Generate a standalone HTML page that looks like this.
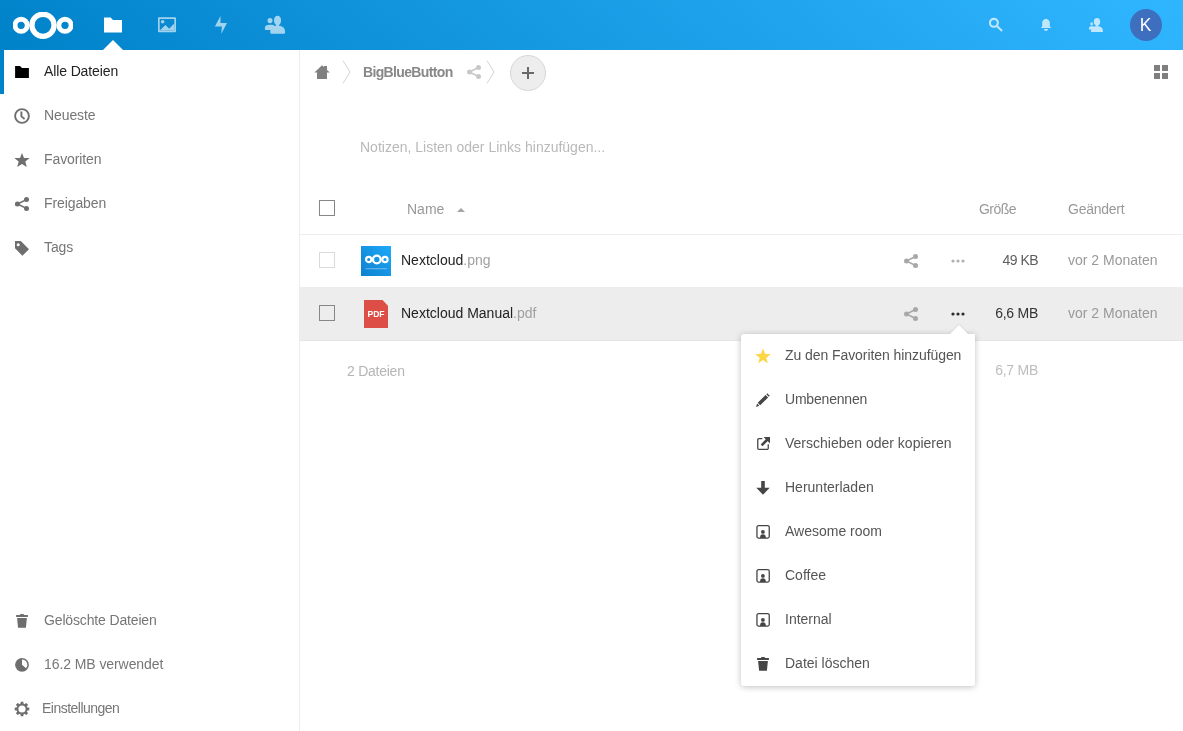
<!DOCTYPE html>
<html><head><meta charset="utf-8">
<style>
*{box-sizing:border-box;margin:0;padding:0}
html,body{width:1183px;height:731px;overflow:hidden;background:#fff;font-family:"Liberation Sans",sans-serif;font-size:14px;color:#222}
.abs{position:absolute}
#header{position:absolute;left:0;top:0;width:1183px;height:50px;background:linear-gradient(40deg,#0082c9 0%,#30b6ff 100%)}
#nav{position:absolute;left:0;top:50px;width:300px;height:681px;border-right:1px solid #ededed;background:#fff}
.ni{position:absolute;left:0;width:299px;height:44px}
.ni .t{position:absolute;left:44px;top:0;line-height:44px;color:#767676;white-space:nowrap}
.ni svg{position:absolute;left:14px;top:14px}
.txt{position:absolute;white-space:nowrap;line-height:20px}
</style></head><body>
<div id="root" style="position:absolute;left:0;top:0;width:1183px;height:731px;will-change:transform">
<div id="header">
  <!-- logo -->
  <svg class="abs" style="left:13px;top:12px" width="60" height="28" viewBox="0 0 60 28">
    <circle cx="30" cy="13.3" r="11.05" fill="none" stroke="#fff" stroke-width="5.3"/>
    <circle cx="8.15" cy="13.3" r="6.1" fill="none" stroke="#fff" stroke-width="4.9"/>
    <circle cx="52" cy="13.3" r="6.1" fill="none" stroke="#fff" stroke-width="4.9"/>
  </svg>
  <!-- folder -->
  <svg class="abs" style="left:104px;top:17px" width="18" height="16" viewBox="0 0 18 16">
    <path d="M0 0.4H6.6L9 2.9H18V15.6H0Z" fill="#fff"/>
  </svg>
  <div class="abs" style="left:103px;top:40px;width:0;height:0;border-left:10px solid transparent;border-right:10px solid transparent;border-bottom:10px solid #fff"></div>
  <!-- gallery -->
  <svg class="abs" style="left:158px;top:17px" width="18" height="16" viewBox="0 0 18 16" opacity="0.62">
    <path d="M1 0.3H17A1 1 0 0 1 18 1.3V14.3A1 1 0 0 1 17 15.3H1A1 1 0 0 1 0 14.3V1.3A1 1 0 0 1 1 0.3Z M1.7 2.1V13.5H16.3V2.1Z" fill="#fff" fill-rule="evenodd"/>
    <circle cx="4.65" cy="4.8" r="1.8" fill="#fff"/>
    <path d="M1.7 13.4L7.4 8.1L11.3 11.7L15.6 7.1L16.3 7.8V13.5H1.7Z" fill="#fff"/>
  </svg>
  <!-- activity -->
  <svg class="abs" style="left:213px;top:15px" width="16" height="20" viewBox="0 0 16 20" opacity="0.62">
    <path d="M7.5 0.9L1.9 11.6H8.9L8.3 18.7L14 8H7.5Z" fill="#fff"/>
  </svg>
  <!-- contacts -->
  <svg class="abs" style="left:264px;top:15px" width="22" height="20" viewBox="0 0 22 20" opacity="0.62">
    <ellipse cx="6" cy="5.6" rx="2.5" ry="2.6" fill="#fff"/>
    <path d="M0.9 13.3C0.9 10.5 2.5 9.7 6 9.7S10.5 10.3 10.5 11V15.1H1.6Q0.9 15.1 0.9 14.3Z" fill="#fff"/>
    <ellipse cx="13.55" cy="5.5" rx="3.55" ry="4.8" fill="#fff"/>
    <path d="M12 9H15V11H12Z" fill="#fff"/>
    <path d="M6.3 16.8C6.3 12.5 9 10.8 13.6 10.8S21 12.5 21 16.8V17.8Q21 18.8 20 18.8H7.3Q6.3 18.8 6.3 17.8Z" fill="#fff"/>
  </svg>
  <!-- search -->
  <svg class="abs" style="left:986px;top:15px" width="20" height="20" viewBox="0 0 20 20" opacity="0.7">
    <circle cx="7.9" cy="7.85" r="3.95" fill="none" stroke="#fff" stroke-width="2.1"/>
    <path d="M10.6 10.8L16.1 16" stroke="#fff" stroke-width="2.1"/>
  </svg>
  <!-- bell -->
  <svg class="abs" style="left:1038px;top:17px" width="16" height="16" viewBox="0 0 16 16" opacity="0.7">
    <path d="M8 1.8C6.6 1.8 5.7 2.9 4.8 3.8C4.3 4.4 4.2 5.2 4.2 6V9.2L2.9 10.9H13.1L11.8 9.2V6C11.8 5.2 11.7 4.4 11.2 3.8C10.3 2.9 9.4 1.8 8 1.8Z" fill="#fff"/>
    <path d="M5.8 12H10.1Q9.5 13.9 8 13.9Q6.4 13.9 5.8 12Z" fill="#fff"/>
  </svg>
  <!-- contacts menu -->
  <svg class="abs" style="left:1088px;top:15px" width="18" height="20" viewBox="0 0 18 20" opacity="0.7">
    <ellipse cx="9" cy="6.7" rx="3.15" ry="3.8" fill="#fff"/>
    <path d="M7.8 10H10.2V11.5H7.8Z" fill="#fff"/>
    <ellipse cx="3.7" cy="8.85" rx="1.3" ry="1.65" fill="#fff"/>
    <path d="M0.9 14C0.9 11.8 2 11.3 3.7 11.3S6.5 11.8 6.5 12.5V14.5H0.9Z" fill="#fff"/>
    <path d="M2.9 16.5C2.9 12.8 5 11.2 9 11.2S15 12.8 15 16.5Q15 16.9 14.5 16.9H3.4Q2.9 16.9 2.9 16.5Z" fill="#fff"/>
  </svg>
  <!-- avatar -->
  <div class="abs" style="left:1130px;top:9px;width:32px;height:32px;border-radius:50%;background:#3e6fbf;color:#fff;font-size:17.5px;line-height:32px;text-align:center;text-indent:-1px">K</div>
</div>

<div id="nav">
  <div class="ni" style="top:0"><div class="abs" style="left:0;top:0;width:4px;height:44px;background:#0082c9"></div>
    <svg width="16" height="16" viewBox="0 0 16 16"><path d="M1.1 2.1H5.9L8.1 4H14.9V13.9H1.1Z" fill="#000"/></svg>
    <div class="t" style="color:#222;top:-1px;letter-spacing:-0.12px">Alle Dateien</div></div>
  <div class="ni" style="top:44px">
    <svg width="16" height="16" viewBox="0 0 16 16"><circle cx="8" cy="8" r="6.9" fill="none" stroke="#6e6e6e" stroke-width="1.9"/><path d="M7.4 3.6V8.4L10.6 11" fill="none" stroke="#6e6e6e" stroke-width="1.9"/></svg>
    <div class="t" style="top:-1px;letter-spacing:-0.1px">Neueste</div></div>
  <div class="ni" style="top:88px">
    <svg width="16" height="16" viewBox="0 0 16 16"><path d="M8 0.9L10 5.9L15.7 6L11.3 9.5L12.8 15L8 11.9L3.2 15L4.7 9.5L0.3 6L6 5.9Z" fill="#6e6e6e"/></svg>
    <div class="t" style="top:-1px;letter-spacing:-0.1px">Favoriten</div></div>
  <div class="ni" style="top:132px">
    <svg width="16" height="16" viewBox="0 0 16 16"><circle cx="3.4" cy="8" r="2.5" fill="#6e6e6e"/><circle cx="12.5" cy="3.6" r="2.5" fill="#6e6e6e"/><circle cx="12.5" cy="12.4" r="2.5" fill="#6e6e6e"/><path d="M3.4 8L12.5 3.6M3.4 8L12.5 12.4" stroke="#6e6e6e" stroke-width="1.6"/></svg>
    <div class="t" style="top:-1px;letter-spacing:-0.1px">Freigaben</div></div>
  <div class="ni" style="top:176px">
    <svg width="16" height="16" viewBox="0 0 16 16"><path d="M1 1H6.8L15 9.3L8.4 15.8L1 8.2Z M4.2 3.3A1.5 1.5 0 1 0 4.2 6.3A1.5 1.5 0 1 0 4.2 3.3Z" fill="#6e6e6e" fill-rule="evenodd"/></svg>
    <div class="t" style="top:-1px;letter-spacing:-0.1px">Tags</div></div>

  <div class="ni" style="top:548px">
    <svg width="16" height="16" viewBox="0 0 16 16"><path d="M2.1 3.1H13.9V4.9H2.1Z M6.2 1.9H9.8V3.1H6.2Z M3.1 6H12.9L11.9 15.7H4Z" fill="#6e6e6e"/></svg>
    <div class="t" style="letter-spacing:-0.15px">Gelöschte Dateien</div></div>
  <div class="ni" style="top:592px">
    <svg width="16" height="16" viewBox="0 0 16 16" style="top:15px"><circle cx="8" cy="7.8" r="6.9" fill="#6e6e6e"/><path d="M8 7.8V2.5A5.3 5.3 0 0 1 12 11.28Z" fill="#fff"/></svg>
    <div class="t" style="letter-spacing:-0.08px">16.2 MB verwendet</div></div>
  <div class="ni" style="top:636px">
    <svg width="16" height="16" viewBox="0 0 16 16" style="top:15px"><path d="M6.28 2.99 L6.75 0.71 L9.25 0.71 L9.72 2.99 L10.33 3.24 L12.27 1.96 L14.04 3.73 L12.76 5.67 L13.01 6.28 L15.29 6.75 L15.29 9.25 L13.01 9.72 L12.76 10.33 L14.04 12.27 L12.27 14.04 L10.33 12.76 L9.72 13.01 L9.25 15.29 L6.75 15.29 L6.28 13.01 L5.67 12.76 L3.73 14.04 L1.96 12.27 L3.24 10.33 L2.99 9.72 L0.71 9.25 L0.71 6.75 L2.99 6.28 L3.24 5.67 L1.96 3.73 L3.73 1.96 L5.67 3.24Z M8 4.4A3.6 3.6 0 1 0 8 11.6A3.6 3.6 0 1 0 8 4.4Z" fill="#6e6e6e" fill-rule="evenodd"/></svg>
    <div class="t" style="left:42px;letter-spacing:-0.52px">Einstellungen</div></div>
</div>

<!-- breadcrumb -->
<svg class="abs" style="left:314px;top:65px" width="16" height="14" viewBox="0 0 16 14">
  <path d="M8 0.2L0.4 7.6H3V14H13V7.6H15.8L13 4.9V1H10V2.1Z" fill="#808080"/>
</svg>
<svg class="abs" style="left:342px;top:60px" width="10" height="25" viewBox="0 0 10 25">
  <path d="M1 0.5L8 12L1 23.5" fill="none" stroke="#d4d4d4" stroke-width="1"/>
</svg>
<div class="txt" style="left:363px;top:62px;font-weight:bold;color:#888;letter-spacing:-0.65px">BigBlueButton</div>
<svg class="abs" style="left:467px;top:65px" width="14" height="14" viewBox="0 0 14 14">
  <circle cx="2.5" cy="7" r="2.5" fill="#c8c8c8"/><circle cx="11.5" cy="2.5" r="2.5" fill="#c8c8c8"/><circle cx="11.5" cy="11.5" r="2.5" fill="#c8c8c8"/>
  <path d="M2.5 7L11.5 2.5M2.5 7L11.5 11.5" stroke="#c8c8c8" stroke-width="1.5"/>
</svg>
<svg class="abs" style="left:486px;top:60px" width="10" height="25" viewBox="0 0 10 25">
  <path d="M1 0.5L8 12L1 23.5" fill="none" stroke="#d4d4d4" stroke-width="1"/>
</svg>
<div class="abs" style="left:510px;top:55px;width:36px;height:36px;border-radius:50%;background:#ededed;border:1px solid #d6d6d6"></div>
<div class="abs" style="left:522px;top:72px;width:12px;height:2px;background:#686868"></div>
<div class="abs" style="left:527px;top:67px;width:2px;height:12px;background:#686868"></div>
<!-- grid view -->
<svg class="abs" style="left:1154px;top:65px" width="14" height="14" viewBox="0 0 14 14">
  <path d="M0 0H6V6H0Z M8 0H14V6H8Z M0 8H6V14H0Z M8 8H14V14H8Z" fill="#7f7f7f"/>
</svg>

<!-- notes placeholder -->
<div class="txt" style="left:360px;top:137px;color:#b9b9b9">Notizen, Listen oder Links hinzufügen...</div>

<!-- table header -->
<div class="abs" style="left:319px;top:200px;width:16px;height:16px;border:1px solid #878787"></div>
<div class="txt" style="left:407px;top:199px;color:#999">Name</div>
<div class="abs" style="left:457px;top:208px;width:0;height:0;border-left:4px solid transparent;border-right:4px solid transparent;border-bottom:4px solid #a5a5a5"></div>
<div class="txt" style="left:979px;top:199px;color:#999;letter-spacing:-0.55px">Größe</div>
<div class="txt" style="left:1068px;top:199px;color:#999;letter-spacing:-0.25px">Geändert</div>
<div class="abs" style="left:300px;top:234px;width:883px;height:1px;background:#ededed"></div>

<!-- row 1 -->
<div class="abs" style="left:319px;top:252px;width:16px;height:16px;border:1px solid #dbdbdb"></div>
<svg class="abs" style="left:361px;top:246px" width="30" height="30" viewBox="0 0 30 30">
  <defs><linearGradient id="g1" x1="0" y1="1" x2="1" y2="0"><stop offset="0" stop-color="#0b80cf"/><stop offset="1" stop-color="#1fa9f8"/></linearGradient></defs>
  <rect x="0" y="0" width="30" height="30" fill="url(#g1)"/>
  <circle cx="15.8" cy="13.5" r="3.85" fill="none" stroke="#fff" stroke-width="2.3"/>
  <circle cx="7.7" cy="13.5" r="2.65" fill="none" stroke="#fff" stroke-width="2.1"/>
  <circle cx="24" cy="13.5" r="2.65" fill="none" stroke="#fff" stroke-width="2.1"/>
  <rect x="4.5" y="22" width="21.5" height="1.3" fill="#fff" opacity="0.3"/>
</svg>
<div class="txt" style="left:401px;top:250px;color:#222">Nextcloud<span style="color:#a0a0a0">.png</span></div>
<svg class="abs" style="left:904px;top:254px" width="14" height="14" viewBox="0 0 14 14">
  <circle cx="2.5" cy="7" r="2.5" fill="#a8a8a8"/><circle cx="11.5" cy="2.5" r="2.5" fill="#a8a8a8"/><circle cx="11.5" cy="11.5" r="2.5" fill="#a8a8a8"/>
  <path d="M2.5 7L11.5 2.5M2.5 7L11.5 11.5" stroke="#a8a8a8" stroke-width="1.5"/>
</svg>
<svg class="abs" style="left:950px;top:258px" width="16" height="6" viewBox="0 0 16 6">
  <circle cx="3" cy="3" r="1.6" fill="#b0b0b0"/><circle cx="8" cy="3" r="1.6" fill="#b0b0b0"/><circle cx="13" cy="3" r="1.6" fill="#b0b0b0"/>
</svg>
<div class="txt" style="left:938px;top:250px;width:100px;text-align:right;color:#5e5e5e;letter-spacing:-0.55px">49 KB</div>
<div class="txt" style="left:1068px;top:250px;color:#999">vor 2 Monaten</div>

<!-- row 2 -->
<div class="abs" style="left:300px;top:287px;width:883px;height:53px;background:#ededed"></div>
<div class="abs" style="left:300px;top:340px;width:883px;height:1px;background:#e6e6e6"></div>
<div class="abs" style="left:319px;top:305px;width:16px;height:16px;border:1px solid #878787"></div>
<svg class="abs" style="left:364px;top:300px" width="24" height="28" viewBox="0 0 24 28">
  <path d="M0 0H18.5L24 5.7V28H0Z" fill="#dd4f46"/>
  <text x="12" y="17.2" text-anchor="middle" font-family="Liberation Sans" font-weight="bold" font-size="8.6" fill="#fff">PDF</text>
</svg>
<div class="txt" style="left:401px;top:303px;color:#222">Nextcloud Manual<span style="color:#a0a0a0">.pdf</span></div>
<svg class="abs" style="left:904px;top:307px" width="14" height="14" viewBox="0 0 14 14">
  <circle cx="2.5" cy="7" r="2.5" fill="#a8a8a8"/><circle cx="11.5" cy="2.5" r="2.5" fill="#a8a8a8"/><circle cx="11.5" cy="11.5" r="2.5" fill="#a8a8a8"/>
  <path d="M2.5 7L11.5 2.5M2.5 7L11.5 11.5" stroke="#a8a8a8" stroke-width="1.5"/>
</svg>
<svg class="abs" style="left:950px;top:311px" width="16" height="6" viewBox="0 0 16 6">
  <circle cx="3" cy="3" r="1.6" fill="#2a2a2a"/><circle cx="8" cy="3" r="1.6" fill="#2a2a2a"/><circle cx="13" cy="3" r="1.6" fill="#2a2a2a"/>
</svg>
<div class="txt" style="left:938px;top:303px;width:100px;text-align:right;color:#333;letter-spacing:-0.25px">6,6 MB</div>
<div class="txt" style="left:1068px;top:303px;color:#999">vor 2 Monaten</div>

<!-- summary -->
<div class="txt" style="left:347px;top:361px;color:#b5b5b5;letter-spacing:-0.25px">2 Dateien</div>
<div class="txt" style="left:938px;top:360px;width:100px;text-align:right;color:#bdbdbd;letter-spacing:-0.25px">6,7 MB</div>

<!-- popover -->
<div id="pop" class="abs" style="left:741px;top:334px;width:234px;height:352px;background:#fff;border-radius:3px 0 3px 3px;box-shadow:0 1px 6px rgba(0,0,0,0.25)">
</div>
<div class="abs" style="left:949px;top:325px;width:0;height:0;border-left:10px solid transparent;border-right:10px solid transparent;border-bottom:10px solid #fff;filter:drop-shadow(0 -1px 1px rgba(0,0,0,0.08))"></div>
<div class="abs" style="left:945px;top:334px;width:28px;height:3px;background:#fff"></div>
<div class="abs" style="left:741px;top:334px;width:234px;height:352px">
  <svg class="abs" style="left:14px;top:14px" width="16" height="16" viewBox="0 0 16 16"><path d="M8 0.5L10 5.8L15.8 6.2L11.3 9.7L12.8 15.3L8 12.1L3.2 15.3L4.7 9.7L0.2 6.2L6 5.8Z" fill="#fdd645"/></svg>
  <div class="txt" style="left:44px;top:11px;color:#555;letter-spacing:-0.07px">Zu den Favoriten hinzufügen</div>
  <svg class="abs" style="left:14px;top:58px" width="16" height="16" viewBox="0 0 16 16"><path d="M12.2 1.3L14.7 3.8L13.8 4.7L11.3 2.2Z M10.6 2.9L13.1 5.4L5.2 13.3L2.7 10.8Z M2.2 11.6L4.4 13.8L1 15Z" fill="#454545"/></svg>
  <div class="txt" style="left:44px;top:55px;color:#555;letter-spacing:-0.2px">Umbenennen</div>
  <svg class="abs" style="left:14px;top:102px" width="16" height="16" viewBox="0 0 16 16"><path d="M7.3 2.7H3.9A1.15 1.15 0 0 0 2.75 3.85V12.2A1.15 1.15 0 0 0 3.9 13.35H12.1A1.15 1.15 0 0 0 13.25 12.2V8.3" fill="none" stroke="#454545" stroke-width="1.3"/><path d="M8.6 1H15V7.4Z" fill="#454545"/><path d="M6.6 9.3L12.4 3.5" stroke="#454545" stroke-width="2.6"/></svg>
  <div class="txt" style="left:44px;top:99px;color:#555">Verschieben oder kopieren</div>
  <svg class="abs" style="left:14px;top:146px" width="16" height="16" viewBox="0 0 16 16"><path d="M6.2 1H9.8V7.8H14.7L8 14.7L1.3 7.8H6.2Z" fill="#454545"/></svg>
  <div class="txt" style="left:44px;top:143px;color:#555">Herunterladen</div>
  <svg class="abs" style="left:14px;top:190px" width="16" height="16" viewBox="0 0 16 16"><rect x="1.95" y="1.65" width="12.3" height="12.4" rx="1.5" fill="none" stroke="#454545" stroke-width="1.3"/><circle cx="7.9" cy="7.9" r="1.9" fill="#454545"/><path d="M5 14.05C5.1 11.2 6 10.3 7.9 10.3S10.8 11.2 10.9 14.05Z" fill="#454545"/></svg>
  <div class="txt" style="left:44px;top:187px;color:#555">Awesome room</div>
  <svg class="abs" style="left:14px;top:234px" width="16" height="16" viewBox="0 0 16 16"><rect x="1.95" y="1.65" width="12.3" height="12.4" rx="1.5" fill="none" stroke="#454545" stroke-width="1.3"/><circle cx="7.9" cy="7.9" r="1.9" fill="#454545"/><path d="M5 14.05C5.1 11.2 6 10.3 7.9 10.3S10.8 11.2 10.9 14.05Z" fill="#454545"/></svg>
  <div class="txt" style="left:44px;top:231px;color:#555">Coffee</div>
  <svg class="abs" style="left:14px;top:278px" width="16" height="16" viewBox="0 0 16 16"><rect x="1.95" y="1.65" width="12.3" height="12.4" rx="1.5" fill="none" stroke="#454545" stroke-width="1.3"/><circle cx="7.9" cy="7.9" r="1.9" fill="#454545"/><path d="M5 14.05C5.1 11.2 6 10.3 7.9 10.3S10.8 11.2 10.9 14.05Z" fill="#454545"/></svg>
  <div class="txt" style="left:44px;top:275px;color:#555">Internal</div>
  <svg class="abs" style="left:14px;top:322px" width="16" height="16" viewBox="0 0 16 16"><path d="M2.1 2H13.9V3.9H2.1Z M6.2 0.9H9.8V2H6.2Z M3.1 5H12.9L11.9 14.7H4.1Z" fill="#454545"/></svg>
  <div class="txt" style="left:44px;top:319px;color:#555">Datei löschen</div>
</div>
</div>
</body></html>
